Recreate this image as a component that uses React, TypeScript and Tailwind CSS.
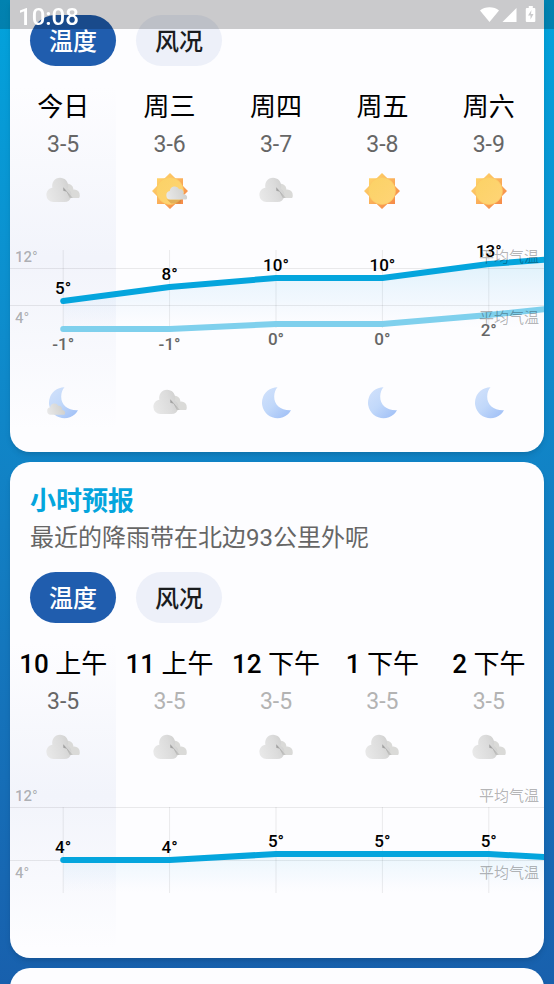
import React, { useId } from "react";

type IconKind = "cloudy" | "sunny" | "partly" | "moon" | "moonCloud";

interface Column {
  label: string;
  date: string;
  day: IconKind;
  night?: IconKind;
  dim?: boolean;
}

interface Point {
  value: string;
  y: number;
}

interface ChartProps {
  height: number;
  high: Point[];
  low?: Point[];
  gridY: [number, number];
  axisY: [number, number];
  vertical: [number, number];
  fillOpacity: number;
}

function Clouds() {
  const id = useId();
  return (
    <>
      <defs>
        <linearGradient id={id + "f"} x1="0" y1="0.6" x2="1" y2="0.3">
          <stop offset="0" stopColor="#e8e8e8" />
          <stop offset="0.6" stopColor="#dcdcdc" />
          <stop offset="1" stopColor="#cfcfce" />
        </linearGradient>
        <linearGradient id={id + "s"} x1="0" y1="0" x2="1" y2="1">
          <stop offset="0" stopColor="#9a9a9a" />
          <stop offset="1" stopColor="#cacac8" />
        </linearGradient>
      </defs>
      <path
        d="M16 27V16h2.800a6.200 6.200 0 0 1 11.500 1.500c0 .4 0 .7-.1 1.100a5.600 5.600 0 0 1 6.600 6.400c-.1.800-.3 1.400-.7 2z"
        fill="#dadad8"
      />
      <path
        d="M10.500 31a7 7 0 0 1-7.100-7c0-3.900 2.800-7 6-7.200C8.300 11.500 11.800 6.700 17 6.700c4.600 0 8.200 3.600 8.200 8 0 1.100-.2 2.200-.6 3.100a7 7 0 0 1-3.300 13.200z"
        fill={`url(#${id}f)`}
      />
      <path d="M20.300 16.300v3.500l3.300 1 3.200 6.200h3.100z" fill={`url(#${id}s)`} />
    </>
  );
}

function SmallCloud() {
  const id = useId();
  return (
    <>
      <defs>
        <linearGradient id={id} x1="0" y1="0.6" x2="1" y2="0.4">
          <stop offset="0" stopColor="#e8e8e8" />
          <stop offset="1" stopColor="#cfcfcc" />
        </linearGradient>
      </defs>
      <path
        d="M4.700 13a4.300 4.300 0 0 1-.4-8.500 5 5 0 0 1 9.400-1.800 3.700 3.700 0 0 1 4.200 5c2-.1 3.500 1 3.700 2.800.1 1-.2 1.900-.8 2.500z"
        fill={`url(#${id})`}
      />
    </>
  );
}

function Sun() {
  const id = useId();
  return (
    <>
      <defs>
        <linearGradient id={id + "r"} x1="0" y1="0" x2="1" y2="1">
          <stop offset="0.15" stopColor="#ffd36a" />
          <stop offset="0.85" stopColor="#f68b48" />
        </linearGradient>
        <linearGradient id={id + "d"} x1="0" y1="0" x2="1" y2="1">
          <stop offset="0" stopColor="#fbd265" />
          <stop offset="1" stopColor="#ffd476" />
        </linearGradient>
      </defs>
      <path
        d="M20 2l5.300 5.300h7.700v7.700L38 20l-5 5v8h-7.700L20 38l-5.300-5H7v-8l-5-5 5-5V7.300h7.700z"
        fill={`url(#${id}r)`}
      />
      <circle cx="20" cy="20" r="13.500" fill={`url(#${id}d)`} stroke="#fbc765" strokeWidth="0.600" />
    </>
  );
}

function Moon() {
  const id = useId();
  return (
    <>
      <defs>
        <linearGradient id={id} x1="0" y1="0.200" x2="0.700" y2="1">
          <stop offset="0" stopColor="#cfe0fb" />
          <stop offset="0.500" stopColor="#c1d8fa" />
          <stop offset="1" stopColor="#a6c4f7" />
        </linearGradient>
      </defs>
      <path
        d="M21.500 4.200A15.500 15.500 0 1 0 35 27.300C25 27.800 18 22 18.200 13.500 18.300 9.500 19.500 6.500 21.500 4.200Z"
        fill={`url(#${id})`}
      />
    </>
  );
}

function WeatherIcon({ kind }: { kind: IconKind }) {
  return (
    <svg viewBox="0 0 40 40" className="size-10" aria-hidden="true">
      {kind === "cloudy" && <Clouds />}
      {kind === "sunny" && <Sun />}
      {kind === "partly" && (
        <>
          <Sun />
          <path d="M17 28.500l4 4h9.500l1-4z" fill="#b97b30" opacity="0.400" />
          <g transform="translate(15.500 15.500)">
            <SmallCloud />
          </g>
        </>
      )}
      {(kind === "moon" || kind === "moonCloud") && <Moon />}
      {kind === "moonCloud" && (
        <g transform="translate(3.500 20.500) scale(0.860)">
          <SmallCloud />
        </g>
      )}
    </svg>
  );
}

function ModeButtons() {
  return (
    <div className="flex gap-5 px-5 text-2xl font-medium">
      <button type="button" className="h-[51px] w-[86px] rounded-full bg-[#205dae] pt-[2px] text-white">
        温度
      </button>
      <button type="button" className="h-[51px] w-[86px] rounded-full bg-[#edf0f9] pt-[2px] text-[#1a1c1e]">
        风况
      </button>
    </div>
  );
}

/* The plot is 534 units wide; columns are centred every 106.4 units. */
const PLOT_WIDTH = 534;
const columnX = (i: number) => 53.2 + 106.4 * i;
const toPoints = (series: Point[]) => series.map((p, i) => `${columnX(i)},${p.y}`).join(" ");

function ValueRow({ series, below }: { series: Point[]; below?: boolean }) {
  return (
    <ul className="absolute inset-0 grid grid-cols-5 pr-[2px]">
      {series.slice(0, 5).map((p, i) => (
        <li
          key={i}
          className={
            "text-center text-[17px] leading-5 font-medium [text-shadow:0_0_2px_#fff] " +
            (below ? "text-[#666666]" : "text-black")
          }
          style={{ paddingTop: p.y + (below ? 5 : -23) }}
        >
          {p.value}
        </li>
      ))}
    </ul>
  );
}

function Chart({ height, high, low, gridY, axisY, vertical, fillOpacity }: ChartProps) {
  const id = useId();
  const line = toPoints(high);
  return (
    <div className="relative" style={{ height }}>
      <svg
        viewBox={`0 0 ${PLOT_WIDTH} ${height}`}
        preserveAspectRatio="none"
        className="block h-full w-full"
        aria-hidden="true"
      >
        <defs>
          <linearGradient
            id={id}
            gradientUnits="userSpaceOnUse"
            x1="0"
            x2="0"
            y1={Math.min(...high.map((p) => p.y))}
            y2={vertical[1]}
          >
            <stop offset="0" stopColor="#04a4dc" stopOpacity={fillOpacity} />
            <stop offset="0.600" stopColor="#52b0f0" stopOpacity={fillOpacity / 2} />
            <stop offset="1" stopColor="#a0b8f0" stopOpacity="0" />
          </linearGradient>
        </defs>
        {gridY.map((y) => (
          <line key={y} x1="0" x2={PLOT_WIDTH} y1={y + 0.5} y2={y + 0.5} stroke="#000" strokeOpacity="0.080" />
        ))}
        {high.map((_, i) => (
          <line
            key={i}
            x1={columnX(i)}
            x2={columnX(i)}
            y1={vertical[0]}
            y2={vertical[1]}
            stroke="#000"
            strokeOpacity="0.080"
          />
        ))}
        <polygon
          points={`${line} ${columnX(high.length - 1)},${vertical[1]} ${columnX(0)},${vertical[1]}`}
          fill={`url(#${id})`}
        />
        {low && (
          <polyline
            points={toPoints(low)}
            fill="none"
            stroke="#7fd0ed"
            strokeWidth="6"
            strokeLinecap="round"
            strokeLinejoin="round"
          />
        )}
        <polyline
          points={line}
          fill="none"
          stroke="#04a5dd"
          strokeWidth="6"
          strokeLinecap="round"
          strokeLinejoin="round"
        />
      </svg>
      {["12°", "4°"].map((mark, i) => (
        <div
          key={mark}
          className="absolute inset-x-0 flex justify-between px-[5px] text-[15px] leading-5 text-black/30"
          style={{ top: axisY[i] - 10 }}
        >
          <span className="font-medium">{mark}</span>
          <span>平均气温</span>
        </div>
      ))}
      <ValueRow series={high} />
      {low && <ValueRow series={low} below />}
    </div>
  );
}

function Forecast({ columns, chart, bold }: { columns: Column[]; chart: ChartProps; bold?: boolean }) {
  return (
    <div className="relative mt-5">
      <div className="absolute inset-0 grid grid-cols-5 pr-[2px]">
        <div className="bg-linear-to-b from-[#f2f4fb]/0 via-[#f2f4fb] to-[#fbf8fd]/0" />
      </div>
      <div className="relative">
        <ul className="grid grid-cols-5 pr-[2px] text-center whitespace-nowrap">
          {columns.map((c) => (
            <li key={c.label} className="flex flex-col items-center">
              <span className={"text-[26px] leading-[42px] text-black " + (bold ? "font-medium" : "")}>
                {bold ? (
                  <>
                    {c.label.split(" ")[0]} <span className="font-normal">{c.label.split(" ")[1]}</span>
                  </>
                ) : (
                  c.label
                )}
              </span>
              <span className={"text-[23px] leading-[34px] " + (c.dim ? "text-[#b3b3b3]" : "text-[#666666]")}>
                {c.date}
              </span>
              <span className="flex h-14 items-end pb-[7px]">
                <WeatherIcon kind={c.day} />
              </span>
            </li>
          ))}
        </ul>
        <Chart {...chart} />
        {columns[0].night && (
          <ul className="grid grid-cols-5 pr-[2px]">
            {columns.map((c) => (
              <li key={c.label} className="flex h-[54px] items-center justify-center">
                {c.night && <WeatherIcon kind={c.night} />}
              </li>
            ))}
          </ul>
        )}
      </div>
    </div>
  );
}

const days: Column[] = [
  { label: "今日", date: "3-5", day: "cloudy", night: "moonCloud" },
  { label: "周三", date: "3-6", day: "partly", night: "cloudy" },
  { label: "周四", date: "3-7", day: "cloudy", night: "moon" },
  { label: "周五", date: "3-8", day: "sunny", night: "moon" },
  { label: "周六", date: "3-9", day: "sunny", night: "moon" },
];

const hours: Column[] = [
  { label: "10 上午", date: "3-5", day: "cloudy" },
  { label: "11 上午", date: "3-5", day: "cloudy", dim: true },
  { label: "12 下午", date: "3-5", day: "cloudy", dim: true },
  { label: "1 下午", date: "3-5", day: "cloudy", dim: true },
  { label: "2 下午", date: "3-5", day: "cloudy", dim: true },
];

const dailyChart: ChartProps = {
  height: 158,
  gridY: [50, 87],
  axisY: [39, 100],
  vertical: [32, 110],
  fillOpacity: 0.14,
  high: [
    { value: "5°", y: 83 },
    { value: "8°", y: 69 },
    { value: "10°", y: 60 },
    { value: "10°", y: 60 },
    { value: "13°", y: 46 },
    { value: "14°", y: 38 },
  ],
  low: [
    { value: "-1°", y: 111 },
    { value: "-1°", y: 111 },
    { value: "0°", y: 106 },
    { value: "0°", y: 106 },
    { value: "2°", y: 97 },
    { value: "4°", y: 86 },
  ],
};

const hourlyChart: ChartProps = {
  height: 173,
  gridY: [32, 85],
  axisY: [21, 98],
  vertical: [32, 118],
  fillOpacity: 0.08,
  high: [
    { value: "4°", y: 85 },
    { value: "4°", y: 85 },
    { value: "5°", y: 79 },
    { value: "5°", y: 79 },
    { value: "5°", y: 79 },
    { value: "4°", y: 85 },
  ],
};

function StatusBar() {
  return (
    <header className="fixed inset-x-0 top-0 z-10 flex h-[29px] items-center justify-between bg-black/20 pr-4 pl-[18px] text-2xl font-medium text-white">
      <time className="mt-[5px]">10:08</time>
      <svg viewBox="0 0 58 18" className="h-[18px] w-[58px]" fill="#fff" aria-hidden="true">
        <path d="M0 4.500C5 .2 14 .2 19 4.500L9.500 16z" />
        <path d="M36.500 2v14H22.500z" />
        <path
          fillRule="evenodd"
          d="M46.800 2h2V0h4v2h1.500q1 0 1 1v12q0 1-1 1h-7.500q-1 0-1-1V3q0-1 1-1zM51.500 4l-3.500 5.500h2.500v4l3-5.500H51z"
        />
      </svg>
    </header>
  );
}

export default function App() {
  return (
    <div className="h-screen overflow-hidden bg-linear-to-b from-[#02a3dc] to-[#1860ad] font-['Roboto','Noto_Sans_CJK_SC',sans-serif]">
      <StatusBar />
      <main className="flex flex-col gap-[10px] px-[10px]">
        <section aria-label="每日预报" className="overflow-hidden rounded-b-[20px] bg-[#fdfdff] pt-[15px] pb-[22px] shadow-md">
          <ModeButtons />
          <Forecast columns={days} chart={dailyChart} />
        </section>
        <section className="overflow-hidden rounded-[20px] bg-[#fdfdff] pt-5 pb-[10px] shadow-md">
          <h2 className="px-5 text-[26px] leading-[38px] font-bold text-[#04a5dd]">小时预报</h2>
          <p className="px-5 pb-4 text-2xl leading-9 text-[#666666]">最近的降雨带在北边93公里外呢</p>
          <ModeButtons />
          <Forecast columns={hours} chart={hourlyChart} bold />
        </section>
        <section aria-label="更多" className="h-20 rounded-[20px] bg-[#fdfdff] shadow-md" />
      </main>
    </div>
  );
}
